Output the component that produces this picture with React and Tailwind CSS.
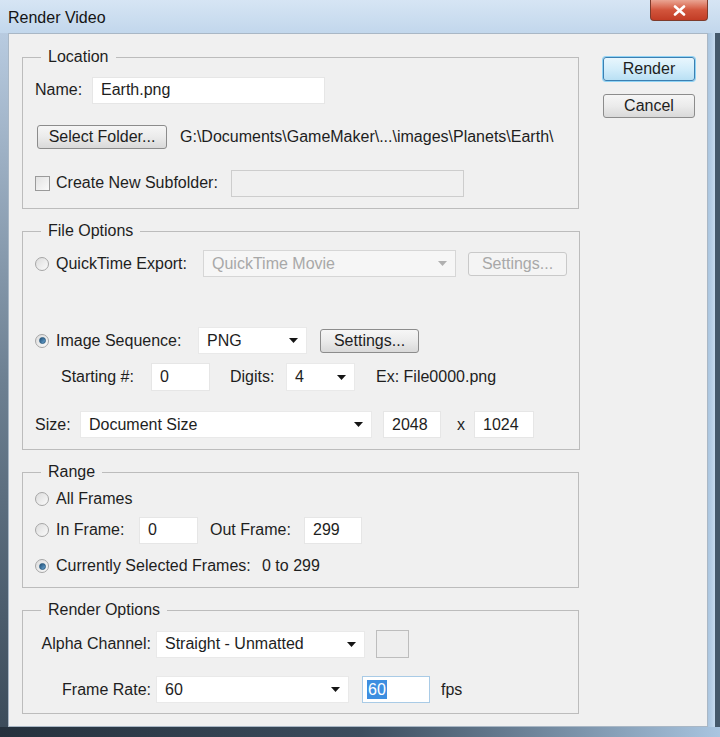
import React from 'react';

const Arrow = ({ muted }) => (
  <svg width="9" height="5" viewBox="0 0 9 5" className="shrink-0">
    <path d="M0 0h9L4.5 5z" fill={muted ? '#b0b0b0' : '#151515'} />
  </svg>
);

const Select = ({ value, className = '', muted }) => (
  <div
    className={`flex h-[27px] items-center justify-between border pl-[8px] pr-[8px] ${
      muted ? 'border-[#d6d6d6] bg-[#f6f6f6] text-[#a8a8a8]' : 'border-[#e9e9e9] bg-white'
    } ${className}`}
  >
    <span>{value}</span>
    <Arrow muted={muted} />
  </div>
);

const Input = ({ value, className = '' }) => (
  <div className={`flex h-[27px] items-center border border-[#e6e6e6] bg-white px-[8px] ${className}`}>{value}</div>
);

const Button = ({ children, className = '', muted }) => (
  <div
    className={`flex h-[24px] items-center justify-center rounded-[3px] border ${
      muted
        ? 'border-[#c9c9c9] bg-[#f4f4f4] text-[#a8a8a8]'
        : 'border-[#8c8c8c] bg-gradient-to-b from-[#f6f6f6] via-[#ebebeb] to-[#d9d9d9]'
    } ${className}`}
  >
    {children}
  </div>
);

const Radio = ({ checked }) => (
  <span className="flex h-[14px] w-[14px] shrink-0 items-center justify-center rounded-full border border-[#a6a6a6] bg-gradient-to-br from-[#dcdcdc] to-[#fbfbfb]">
    {checked && (
      <span className="h-[7px] w-[7px] rounded-full border border-[#2b5d83] bg-gradient-to-br from-[#1f4f78] to-[#6aa6d3]" />
    )}
  </span>
);

const Group = ({ title, className = '', children }) => (
  <fieldset className={`w-[557px] border border-[#bcbcbc] px-[12px] ${className}`}>
    <legend className="ml-[6px] px-[7px] leading-[18px]">{title}</legend>
    {children}
  </fieldset>
);

export default function App() {
  return (
    <div className="flex h-[737px] w-[720px] flex-col overflow-hidden bg-[#bcd3ea] font-['Liberation_Sans',Arial,sans-serif] text-[16px] text-[#1e1e1e]">
      {/* title bar */}
      <div className="flex h-[33px] shrink-0 items-start justify-between bg-gradient-to-b from-[#d6e5f4] to-[#c2d7ec] pl-[8px] pr-[12px]">
        <span className="mt-[6px] text-[#141414]">Render Video</span>
        <div className="flex h-[21px] w-[58px] items-center justify-center rounded-b-[4px] border border-t-0 border-[#7d3b2c] bg-gradient-to-b from-[#e9a493] via-[#d2553c] to-[#c23c25]">
          <svg width="13" height="11" viewBox="0 0 13 11">
            <path d="M2 1.5l9 8M11 1.5l-9 8" stroke="#fff" strokeWidth="2.6" strokeLinecap="round" />
          </svg>
        </div>
      </div>

      <div className="flex h-[694px] shrink-0">
        <div className="w-[8px] bg-gradient-to-b from-[#b8cbe0] via-[#6d8092] to-[#3c4c5b]" />

        {/* client area */}
        <div className="flex h-[694px] w-[700px] border border-[#a9b7c5] bg-[#f0f0f0] pl-[13px] pt-[14px]">
          <div className="flex flex-col gap-[13px]">
            <Group title="Location" className="pb-[12px] pt-[11px]">
              <div className="flex h-[26px] items-center">
                <span className="w-[57px]">Name:</span>
                <Input value="Earth.png" className="h-[26px] w-[233px]" />
              </div>
              <div className="mt-[21px] flex h-[26px] items-center">
                <Button className="ml-[2px] w-[130px]">Select Folder...</Button>
                <span className="ml-[13px]">G:\Documents\GameMaker\...\images\Planets\Earth\</span>
              </div>
              <div className="mt-[20px] flex h-[26px] items-center">
                <span className="h-[15px] w-[15px] border border-[#9a9a9a] bg-gradient-to-br from-[#e2e2e2] to-[#fafafa]" />
                <span className="ml-[6px] w-[175px]">Create New Subfolder:</span>
                <div className="h-[27px] w-[233px] border border-[#cdcdcd] bg-[#f0f0f0]" />
              </div>
            </Group>

            <Group title="File Options" className="pb-[11px] pt-[10px]">
              <div className="flex h-[27px] items-center">
                <Radio />
                <span className="ml-[7px] w-[147px]">QuickTime Export:</span>
                <Select value="QuickTime Movie" muted className="w-[253px]" />
                <Button muted className="ml-[12px] w-[99px]">Settings...</Button>
              </div>
              <div className="mt-[50px] flex h-[27px] items-center">
                <Radio checked />
                <span className="ml-[7px] w-[142px]">Image Sequence:</span>
                <Select value="PNG" className="w-[109px]" />
                <Button className="ml-[13px] w-[99px]">Settings...</Button>
              </div>
              <div className="mt-[9px] flex h-[28px] items-center">
                <span className="ml-[26px] w-[90px]">Starting #:</span>
                <Input value="0" className="h-[28px] w-[59px]" />
                <span className="ml-[20px] w-[56px]">Digits:</span>
                <Select value="4" className="h-[28px] w-[69px]" />
                <span className="ml-[21px]">Ex: File0000.png</span>
              </div>
              <div className="mt-[20px] flex h-[27px] items-center">
                <span className="w-[45px]">Size:</span>
                <Select value="Document Size" className="w-[292px]" />
                <Input value="2048" className="ml-[11px] w-[58px]" />
                <span className="ml-[16px] w-[17px]">x</span>
                <Input value="1024" className="w-[60px]" />
              </div>
            </Group>

            <Group title="Range" className="pb-[11px] pt-[8px]">
              <div className="flex h-[20px] items-center">
                <Radio />
                <span className="ml-[7px]">All Frames</span>
              </div>
              <div className="mt-[8px] flex h-[26px] items-center">
                <Radio />
                <span className="ml-[7px] w-[83px]">In Frame:</span>
                <Input value="0" className="h-[26px] w-[59px]" />
                <span className="ml-[12px] w-[94px]">Out Frame:</span>
                <Input value="299" className="h-[26px] w-[58px]" />
              </div>
              <div className="mt-[13px] flex h-[20px] items-center">
                <Radio checked />
                <span className="ml-[7px] w-[206px]">Currently Selected Frames:</span>
                <span>0 to 299</span>
              </div>
            </Group>

            <Group title="Render Options" className="pb-[10px] pt-[11px]">
              <div className="flex h-[28px] items-center">
                <span className="w-[116px] text-right">Alpha Channel:</span>
                <Select value="Straight - Unmatted" className="ml-[5px] w-[209px]" />
                <div className="ml-[11px] h-[28px] w-[33px] border border-[#bdbdbd] bg-[#eeeeee]" />
              </div>
              <div className="mt-[18px] flex h-[27px] items-center">
                <span className="w-[116px] text-right">Frame Rate:</span>
                <Select value="60" className="ml-[5px] w-[193px]" />
                <div className="ml-[13px] flex h-[27px] w-[68px] items-center border border-[#a9cbe6] bg-white px-[4px]">
                  <span className="bg-[#3d8ee0] px-[1px] leading-[19px] text-white">60</span>
                </div>
                <span className="ml-[11px]">fps</span>
              </div>
            </Group>
          </div>

          {/* buttons */}
          <div className="ml-[23px] mt-[9px] flex flex-col gap-[13px]">
            <div className="flex h-[24px] w-[92px] items-center justify-center rounded-[3px] border border-[#3c7fb1] bg-gradient-to-b from-[#e8f6fd] via-[#d3edfa] to-[#b9e0f4] shadow-[0_0_0_1px_#8fd3f5]">
              Render
            </div>
            <Button className="w-[92px]">Cancel</Button>
          </div>
        </div>

        <div className="flex w-[12px]">
          <div className="w-[7px] bg-gradient-to-r from-[#a9c4de] to-[#c6dbef]" />
          <div className="w-[5px] bg-[#45596b]" />
        </div>
      </div>

      <div className="h-[10px] bg-gradient-to-r from-[#25313d] via-[#3c4d5e] to-[#a9c5e0]" />
    </div>
  );
}
